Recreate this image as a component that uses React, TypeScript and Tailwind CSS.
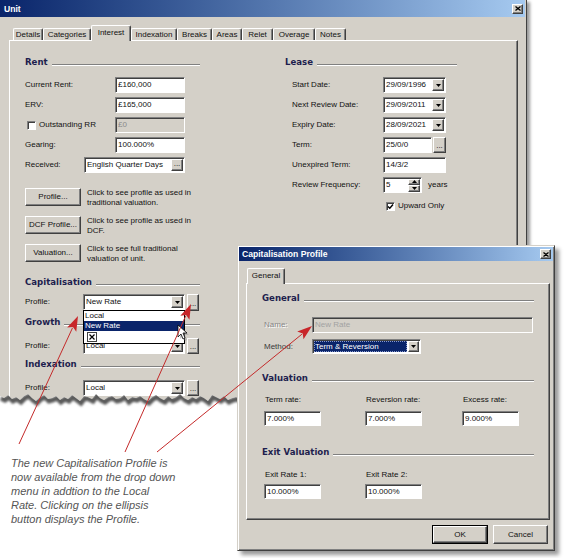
import type { ReactNode } from "react";

const face = "bg-[#d4d0c8]";
const raised =
  "border border-t-white border-l-white border-r-[#404040] border-b-[#404040] shadow-[inset_-1px_-1px_0_#808080]";
const sunken =
  "border border-t-[#808080] border-l-[#808080] border-r-white border-b-white shadow-[inset_1px_1px_0_#404040]";

function Tri({ up = false }: { up?: boolean }) {
  return (
    <svg width="5" height="3" viewBox="0 0 5 3">
      <path d={up ? "M2.5 0L5 3H0Z" : "M0 0H5L2.5 3Z"} fill="#000" />
    </svg>
  );
}

function DropBtn() {
  return (
    <div className={`${face} ${raised} w-[12px] h-[12px] flex items-center justify-center shrink-0`}>
      <Tri />
    </div>
  );
}

function Dots({ className = "" }: { className?: string }) {
  return (
    <div className={`${face} ${raised} flex items-end justify-center shrink-0 text-[8px] leading-[8px] pb-[2px] ${className}`}>
      ...
    </div>
  );
}

function CloseBtn() {
  return (
    <div className={`${face} ${raised} w-[11px] h-[10px] flex items-center justify-center`}>
      <svg width="6" height="5" viewBox="0 0 6 5">
        <path d="M0.5 0.5L5.5 4.5M5.5 0.5L0.5 4.5" stroke="#000" strokeWidth="1.3" />
      </svg>
    </div>
  );
}

function Check({ checked = false }: { checked?: boolean }) {
  return (
    <div className={`${sunken} bg-white w-[9px] h-[9px] flex items-center justify-center shrink-0`}>
      {checked && (
        <svg width="7" height="7" viewBox="0 0 7 7">
          <path d="M1 3.5L2.8 5.3L6 1.5" stroke="#000" strokeWidth="1.4" fill="none" />
        </svg>
      )}
    </div>
  );
}

function Field({
  className = "",
  disabled = false,
  children,
  right,
}: {
  className?: string;
  disabled?: boolean;
  children?: ReactNode;
  right?: ReactNode;
}) {
  return (
    <div
      className={`${sunken} ${disabled ? face + " text-[#8a8a8a]" : "bg-white"} flex items-center shrink-0 pl-[2px] pr-[1px] ${className}`}
    >
      <span className="flex-1 whitespace-nowrap overflow-hidden">{children}</span>
      {right}
    </div>
  );
}

function Heading({ children }: { children: ReactNode }) {
  return (
    <div className="flex items-center h-[12px]">
      <span className="font-['DejaVu_Sans',sans-serif] font-bold text-[8.6px] text-[#1e1e4e] whitespace-nowrap">
        {children}
      </span>
      <div className="flex-1 ml-[4px] mt-[5px] border-t border-t-[#808080] border-b border-b-white" />
    </div>
  );
}

function Row({ label, lw, children }: { label: ReactNode; lw: string; children: ReactNode }) {
  return (
    <div className="flex items-center h-[16px]">
      <div className={`${lw} shrink-0 flex items-center`}>{label}</div>
      {children}
    </div>
  );
}

function Button({ label, className = "" }: { label: string; className?: string }) {
  return (
    <div className={`${face} ${raised} flex items-center justify-center shrink-0 ${className}`}>{label}</div>
  );
}

const unitTabs: [string, string][] = [
  ["Details", "w-[30px]"],
  ["Categories", "w-[48px]"],
  ["Interest", "w-[40px]"],
  ["Indexation", "w-[46px]"],
  ["Breaks", "w-[35px]"],
  ["Areas", "w-[30px]"],
  ["Relet", "w-[31px]"],
  ["Overage", "w-[42px]"],
  ["Notes", "w-[31px]"],
];

function Tab({ label, w, active }: { label: string; w: string; active: boolean }) {
  return (
    <div
      className={`${face} ${w} border-t border-l border-t-white border-l-white border-r border-r-[#404040] shadow-[inset_-1px_0_0_#808080] rounded-t-[2px] flex items-center justify-center whitespace-nowrap ${
        active ? "relative h-[16px] -mb-px pb-[2px]" : "h-[12px]"
      }`}
    >
      {label}
    </div>
  );
}

function DateCombo({ v }: { v: string }) {
  return (
    <Field className="w-[63px] h-[16px]" right={<DropBtn />}>
      {v}
    </Field>
  );
}

function UnitWindow() {
  return (
    <div
      className={`absolute left-0 top-0 w-[527px] h-[404px] ${face} border-r border-r-[#404040] shadow-[3px_2px_3px_rgba(0,0,0,0.4)] flex flex-col overflow-hidden`}
    >
      <div className="h-[17px] mr-[1px] bg-linear-to-r from-[#0a246a] to-[#a6caf0] flex items-center justify-between pl-[4px] pr-[2px] shrink-0">
        <span className="text-white font-bold text-[8.6px]">Unit</span>
        <CloseBtn />
      </div>
      <div className="flex-1 flex flex-col pt-[8px] pl-[9px] pr-[8px]">
        <div className="flex items-end h-[15px] pl-[4px] shrink-0">
          {unitTabs.map(([l, w]) => (
            <Tab key={l} label={l} w={w} active={l === "Interest"} />
          ))}
        </div>
        <div className="flex-1 border-l border-t border-l-white border-t-white border-r border-r-[#404040] shadow-[inset_-1px_0_0_#808080] flex items-start">
          {/* left column */}
          <div className="w-[175px] ml-[15px] pt-[15px] flex flex-col shrink-0">
            <Heading>Rent</Heading>
            <div className="mt-[9px] flex flex-col gap-[4px]">
              <Row label="Current Rent:" lw="w-[90px]">
                <Field className="w-[70px] h-[16px]">£160,000</Field>
              </Row>
              <Row label="ERV:" lw="w-[90px]">
                <Field className="w-[70px] h-[16px]">£165,000</Field>
              </Row>
              <Row
                lw="w-[90px]"
                label={
                  <>
                    <div className="ml-[2px]">
                      <Check />
                    </div>
                    <span className="ml-[3px]">Outstanding RR</span>
                  </>
                }
              >
                <Field disabled className="w-[70px] h-[16px]">
                  £0
                </Field>
              </Row>
              <Row label="Gearing:" lw="w-[90px]">
                <Field className="w-[70px] h-[16px]">100.000%</Field>
              </Row>
              <Row label="Received:" lw="w-[59px]">
                <Field className="w-[101px] h-[16px]" right={<Dots className="w-[12px] h-[12px]" />}>
                  English Quarter Days
                </Field>
              </Row>
            </div>
            <div className="mt-[15px] flex flex-col gap-[10px]">
              {[
                ["Profile...", "Click to see profile as used in", "traditional valuation."],
                ["DCF Profile...", "Click to see profile as used in", "DCF."],
                ["Valuation...", "Click to see full traditional", "valuation of unit."],
              ].map(([b, l1, l2]) => (
                <div key={b} className="flex items-start h-[18px]">
                  <Button label={b} className="w-[56px] h-[18px]" />
                  <p className="ml-[6px] leading-[10px] whitespace-nowrap">
                    {l1}
                    <br />
                    {l2}
                  </p>
                </div>
              ))}
            </div>

            <div className="mt-[14px]">
              <Heading>Capitalisation</Heading>
            </div>
            <div className="mt-[6px] flex items-center h-[16px]">
              <div className="w-[58px] shrink-0">Profile:</div>
              <div className="relative">
                <Field className="w-[102px] h-[16px]" right={<DropBtn />}>
                  New Rate
                </Field>
                <div className="absolute left-0 top-[16px] w-[102px] h-[34px] bg-white border border-black z-20 flex flex-col">
                  <div className="h-[10px] pl-[1px] leading-[10px]">Local</div>
                  <div className="h-[10px] pl-[1px] leading-[10px] bg-[#0a246a] text-white">New Rate</div>
                  <div className="pl-[3px] pt-[1px]">
                    <div className="w-[10px] h-[10px] border border-[#404040] bg-white flex items-center justify-center">
                      <svg width="6" height="6" viewBox="0 0 6 6">
                        <path d="M0.5 0.5L5.5 5.5M5.5 0.5L0.5 5.5" stroke="#000" strokeWidth="1.2" />
                      </svg>
                    </div>
                  </div>
                </div>
              </div>
              <Dots className="w-[12px] h-[17px] ml-[2px]" />
            </div>

            <div className="mt-[6px]">
              <Heading>Growth</Heading>
            </div>
            <div className="mt-[10px] flex items-center h-[16px]">
              <div className="w-[58px] shrink-0">Profile:</div>
              <Field className="w-[102px] h-[16px]" right={<DropBtn />}>
                Local
              </Field>
              <Dots className="w-[12px] h-[16px] ml-[2px]" />
            </div>

            <div className="mt-[4px]">
              <Heading>Indexation</Heading>
            </div>
            <div className="mt-[10px] flex items-center h-[16px]">
              <div className="w-[58px] shrink-0">Profile:</div>
              <Field className="w-[102px] h-[16px]" right={<DropBtn />}>
                Local
              </Field>
              <Dots className="w-[12px] h-[16px] ml-[2px]" />
            </div>
          </div>

          {/* right column */}
          <div className="w-[172px] ml-[85px] pt-[15px] flex flex-col shrink-0">
            <Heading>Lease</Heading>
            <div className="mt-[9px] flex flex-col gap-[4px] pl-[7px]">
              <Row label="Start Date:" lw="w-[91px]">
                <DateCombo v="29/09/1996" />
              </Row>
              <Row label="Next Review Date:" lw="w-[91px]">
                <DateCombo v="29/09/2011" />
              </Row>
              <Row label="Expiry Date:" lw="w-[91px]">
                <DateCombo v="28/09/2021" />
              </Row>
              <Row label="Term:" lw="w-[91px]">
                <Field className="w-[49px] h-[16px]">25/0/0</Field>
                <Dots className="w-[13px] h-[16px] ml-[1px]" />
              </Row>
              <Row label="Unexpired Term:" lw="w-[91px]">
                <Field className="w-[63px] h-[16px]">14/3/2</Field>
              </Row>
              <Row label="Review Frequency:" lw="w-[91px]">
                <Field
                  className="w-[39px] h-[16px]"
                  right={
                    <div className="flex flex-col w-[12px] h-[13px] shrink-0">
                      <div className={`${face} ${raised} flex-1 flex items-center justify-center`}>
                        <Tri up />
                      </div>
                      <div className={`${face} ${raised} flex-1 flex items-center justify-center`}>
                        <Tri />
                      </div>
                    </div>
                  }
                >
                  5
                </Field>
                <span className="ml-[6px]">years</span>
              </Row>
            </div>
            <div className="mt-[8px] pl-[101px] flex items-center h-[10px]">
              <Check checked />
              <span className="ml-[3px]">Upward Only</span>
            </div>
          </div>
        </div>
      </div>
    </div>
  );
}

const jag = [
  4, 6, 3, 7, 5, 8, 4, 2, 6, 9, 5, 3, 7, 6, 4, 8, 5, 7, 3, 6, 9, 4, 5, 7, 2, 6, 8, 5, 4, 7, 6, 3, 8, 5, 6, 4,
  7, 9, 5, 3, 6, 8, 4, 7, 5, 2, 6, 8, 5, 7, 4, 6, 9, 3, 5, 7, 4, 8, 6, 5, 7,
];

function Tear() {
  const pts = jag.map((y, i) => `${i * 4},${y}`).join(" ");
  const below = `M${pts.split(" ").join(" L")} L240,22 L0,22 Z`;
  return (
    <svg className="absolute left-0 top-[392px] z-10" width="240" height="22" viewBox="0 0 240 22">
      <defs>
        <clipPath id="tearBelow">
          <path d={below} />
        </clipPath>
        <filter id="tearBlur" x="-10%" y="-100%" width="120%" height="300%">
          <feGaussianBlur stdDeviation="1.2" />
        </filter>
      </defs>
      <path d={below} fill="#fff" />
      <g clipPath="url(#tearBelow)">
        <polyline
          points={pts}
          transform="translate(1,2)"
          fill="none"
          stroke="#5a5a5a"
          strokeWidth="5"
          filter="url(#tearBlur)"
        />
      </g>
    </svg>
  );
}

function CapWindow() {
  return (
    <div
      className={`absolute left-[237px] top-[245px] w-[318px] h-[306px] ${face} border border-t-[#d4d0c8] border-l-[#d4d0c8] border-r-[#404040] border-b-[#404040] shadow-[inset_1px_1px_0_#fff,inset_-1px_-1px_0_#808080,4px_4px_4px_rgba(0,0,0,0.4)] p-[1px] flex flex-col z-30`}
    >
      <div className="h-[14px] bg-linear-to-r from-[#0a246a] to-[#a6caf0] flex items-center justify-between pl-[3px] pr-[2px] shrink-0">
        <span className="text-white font-bold text-[8.6px]">Capitalisation Profile</span>
        <CloseBtn />
      </div>
      <div className="pt-[7px] pl-[8px] flex items-end h-[22px] shrink-0">
        <Tab label="General" w="w-[38px]" active />
      </div>
      <div className="ml-[7px] w-[304px] h-[237px] border border-t-white border-l-white border-r-[#404040] border-b-[#404040] shadow-[inset_-1px_-1px_0_#808080] pt-[8px] pl-[15px] pr-[15px] flex flex-col">
        <Heading>General</Heading>
        <div className="mt-[13px] flex items-center h-[16px] pl-[2px]">
          <div className="w-[48px] shrink-0 text-[#858585] [text-shadow:1px_1px_0_#fff]">Name:</div>
          <Field disabled className="flex-1 h-[16px] mr-[1px]">
            <span className="text-[#a2a2a2]">New Rate</span>
          </Field>
        </div>
        <div className="mt-[6px] flex items-center h-[15px] pl-[2px]">
          <div className="w-[48px] shrink-0 text-[#3a3a3a]">Method:</div>
          <div className={`${sunken} bg-white w-[109px] h-[15px] flex items-center pl-[1px] pr-[1px]`}>
            <span className="flex-1 h-[11px] bg-[#0a246a] text-white leading-[11px] pl-[1px] outline-1 outline-dotted outline-[#8899cc] -outline-offset-1 mr-[1px]">
              Term &amp; Reversion
            </span>
            <div className={`${face} ${raised} w-[11px] h-[11px] flex items-center justify-center shrink-0`}>
              <Tri />
            </div>
          </div>
        </div>

        <div className="mt-[18px]">
          <Heading>Valuation</Heading>
        </div>
        <div className="mt-[11px] grid grid-cols-[101px_97px_1fr] pl-[2px]">
          {[
            ["Term rate:", "7.000%"],
            ["Reversion rate:", "7.000%"],
            ["Excess rate:", "9.000%"],
          ].map(([l, v]) => (
            <div key={l} className="flex flex-col">
              <div className="h-[10px] pl-[1px]">{l}</div>
              <Field className="w-[57px] h-[15px] mt-[6px]">{v}</Field>
            </div>
          ))}
        </div>

        <div className="mt-[20px]">
          <Heading>Exit Valuation</Heading>
        </div>
        <div className="mt-[12px] grid grid-cols-[101px_97px_1fr] pl-[2px]">
          {[
            ["Exit Rate 1:", "10.000%"],
            ["Exit Rate 2:", "10.000%"],
          ].map(([l, v]) => (
            <div key={l} className="flex flex-col">
              <div className="h-[10px] pl-[1px]">{l}</div>
              <Field className="w-[57px] h-[15px] mt-[4px]">{v}</Field>
            </div>
          ))}
        </div>
      </div>
      <div className="mt-[5px] pr-[5px] flex justify-end gap-[5px]">
        <div className="w-[56px] h-[19px] border border-black">
          <Button label="OK" className="w-full h-full" />
        </div>
        <Button label="Cancel" className="w-[55px] h-[19px]" />
      </div>
    </div>
  );
}

function Arrow({ x1, y1, x2, y2 }: { x1: number; y1: number; x2: number; y2: number }) {
  const dx = x2 - x1;
  const dy = y2 - y1;
  const len = Math.hypot(dx, dy);
  const ux = dx / len;
  const uy = dy / len;
  const L = 15;
  const W = 5;
  const bx = x2 - ux * L;
  const by = y2 - uy * L;
  const pts = `${x2},${y2} ${bx - uy * W},${by + ux * W} ${bx + ux * 3},${by + uy * 3} ${bx + uy * W},${by - ux * W}`;
  return (
    <g>
      <line x1={x1} y1={y1} x2={bx + ux * 2} y2={by + uy * 2} stroke="#c42a2a" strokeWidth="1" />
      <polygon points={pts} fill="#c8262a" />
    </g>
  );
}

export default function App() {
  return (
    <div className="relative w-[568px] h-[558px] bg-white overflow-hidden font-['Liberation_Sans',Arial,sans-serif] text-[8px] leading-[10px] text-[#111]">
      <UnitWindow />
      <Tear />
      <CapWindow />

      <p className="absolute left-[11px] top-[456px] text-[11px] leading-[14px] italic text-[#555] whitespace-nowrap">
        The new Capitalisation Profile is
        <br />
        now available from the drop down
        <br />
        menu in addtion to the Local
        <br />
        Rate. Clicking on the ellipsis
        <br />
        button displays the Profile.
      </p>

      <svg className="absolute left-0 top-0 z-40 pointer-events-none" width="568" height="558" viewBox="0 0 568 558">
        {/* mouse pointer over the list */}
        <g transform="translate(178,325)">
          <path d="M2 2L2 14L5 11L7 16L9 15L7 10L11 10Z" fill="#9a9a9a" opacity="0.55" />
          <path d="M0 0L0 12L3 9L5 14L7 13L5 8L9 8Z" fill="#fff" stroke="#000" strokeWidth="0.8" />
        </g>
        <Arrow x1={19} y1={444} x2={78} y2={316} />
        <Arrow x1={125} y1={452} x2={191} y2={304} />
        <Arrow x1={157} y1={452} x2={312} y2={326} />
      </svg>
    </div>
  );
}
